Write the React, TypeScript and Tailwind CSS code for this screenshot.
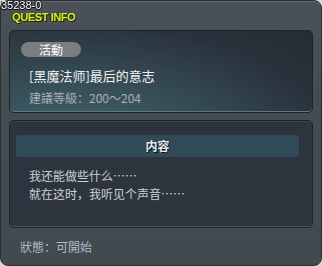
export default function App() {
  const cjk = { fontFamily: "'Noto Sans CJK SC', 'Noto Sans', sans-serif" };

  return (
    <div className="w-[322px] h-[266px] bg-[#d9d9d9]">
      {/* Window frame */}
      <div className="relative w-[322px] h-[266px] rounded-[8px] border border-[#2a2f35] bg-[linear-gradient(180deg,#4a5159_0%,#444b53_40%,#42494f_100%)] shadow-[inset_0_1px_0_#5f676f] px-[8px] flex flex-col">
        {/* Quest id */}
        <div
          className="absolute top-[-1px] left-[0px] text-[11px] leading-[10px] text-white [text-shadow:1px_0_0_#000,-1px_0_0_#000,0_1px_0_#000]"
          style={{ fontFamily: "'Liberation Sans', Arial, sans-serif" }}
        >
          35238-0
        </div>

        {/* Title */}
        <div
          className="h-[29px] pl-[3px] pt-[10px] text-[11px] leading-[12px] font-bold tracking-[-0.4px] text-[#d6ef1e] [text-shadow:1px_1px_0_#1a1d10,-1px_0_0_#1a1d10]"
          style={{ fontFamily: "'Liberation Sans', Arial, sans-serif" }}
        >
          QUEST INFO
        </div>

        {/* Quest summary panel */}
        <div
          className="h-[83px] rounded-[5px] border border-[#1d232a] bg-[radial-gradient(ellipse_at_20%_150%,#46686f_0%,#354b54_45%,#29313b_78%,#262c36_100%)] shadow-[inset_0_-1px_0_#587883] flex flex-col"
          style={cjk}
        >
          <div className="mt-[11px] ml-[11px] w-[60px] h-[15px] rounded-full bg-[#7a7e83] text-[12px] leading-[15px] text-white text-center">
            活動
          </div>
          <div className="mt-[11px] ml-[19px] text-[13px] leading-[16px] text-[#f2f2f2]">
            [黑魔法师]最后的意志
          </div>
          <div className="mt-[6px] ml-[19px] text-[12px] leading-[16px] text-[#a6b0b8]">
            建議等級：200～204
          </div>
        </div>

        {/* Content panel */}
        <div
          className="mt-[7px] h-[108px] rounded-[5px] border border-[#1d232a] bg-[#2e343e] shadow-[inset_0_1px_0_#3c434c,inset_0_-1px_0_#4a5a64] flex flex-col"
          style={cjk}
        >
          <div className="mt-[14px] ml-[6px] w-[283px] h-[22px] rounded-[3px] bg-[#314a57] text-[12px] leading-[22px] font-bold text-[#e3eaee] text-center [text-shadow:1px_1px_0_#111]">
            内容
          </div>
          <div className="mt-[10px] ml-[19px] flex flex-col text-[12px] leading-[18px] text-[#c9d0d6]">
            <span>我还能做些什么……</span>
            <span>就在这时，我听见个声音……</span>
          </div>
        </div>

        {/* Status */}
        <div className="mt-[11px] ml-[11px] text-[12px] leading-[16px] text-[#b3bbc2]" style={cjk}>
          狀態：可開始
        </div>
      </div>
    </div>
  );
}
